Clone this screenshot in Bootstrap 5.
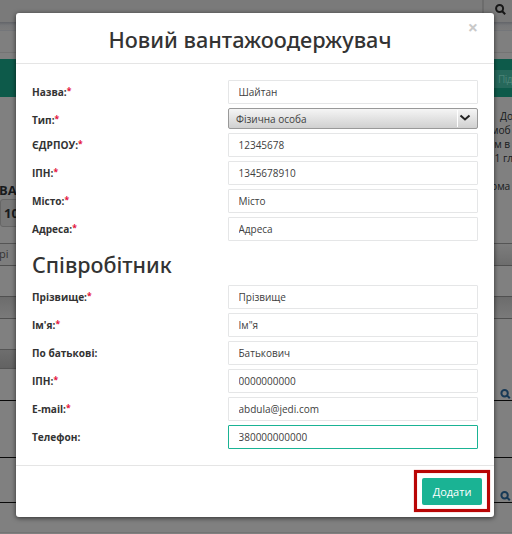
<!DOCTYPE html>
<html lang="uk">
<head>
<meta charset="utf-8">
<meta name="viewport" content="width=device-width, initial-scale=1">
<title>Новий вантажоодержувач</title>
<link href="https://cdn.jsdelivr.net/npm/bootstrap@5.3.0/dist/css/bootstrap.min.css" rel="stylesheet">
<style>
body{width:512px;height:534px;overflow:hidden;background:#808080;font-family:"Open Sans","Noto Sans",sans-serif;font-size:11px;line-height:14px;color:#333}
/* dimmed page */
.page-under{height:534px;color:#171a1c}
.band{display:flex;justify-content:space-between;flex:none;overflow:hidden;white-space:nowrap}
.b-top{height:22px;background:#7a7a7a}
.b-top .search-cell{width:30px;height:13px;border-left:2px solid #6c6c6c;padding:4px 0 0 11px;overflow:visible}
.b-edge{height:8px;background:linear-gradient(#626469,#767779 40%,#7b7b7b)}
.b-crumb{height:23px;background:#7f7f7f;border-top:1px solid #74767a;border-bottom:1px solid #747474}
.b-gap{height:6px}
.b-teal{height:38px;background:#0d5a4a;padding-top:11px}
.b-teal span{width:19px;height:18px;background:#26685b;color:#4b8478;padding:2px 0 0 5px;font-size:10px;letter-spacing:-.5px}
.b-text{height:146px}
.left-note{width:17px;padding-top:86px}
.left-note b{display:block;font-size:13px;line-height:15px;margin-left:-1px}
.qty{width:30px;height:28px;margin-top:1px;border:1px solid #666;border-radius:3px;background:#787878;font-size:13px;font-weight:700;padding:6px 3px}
.right-note{width:24px;padding-top:12px;font-size:10.2px}
.right-note p{margin:0;height:14px}
.right-note .in{padding-left:12px}
.right-note .in1{padding-left:3px}
.right-note .tight{margin-left:-2px}
.b-input{height:22px;border-top:1px solid #555}
.b-input .l{width:16px;background:#7d7d7d;padding-top:3px;color:#333;text-indent:-1px}
.b-input .r{width:19px;background:linear-gradient(#7d7d7d,#6d6d6d)}
.b-plain{height:31px;border-top:1px solid #505050}
.b-grad{height:22px;border-top:1px solid #505050;background:linear-gradient(#6c6c6c,#7a7a7a)}
.b-foot{height:51px;border-top:1px solid #505050;padding-top:30px}
.b-foot .l{width:17px;height:20px;border-top:1px solid #555;border-bottom:1px solid #555;background:linear-gradient(#6e6e6e,#626262)}
.b-row{border-bottom:1px solid #0a0a0a;justify-content:flex-end;align-items:flex-end;padding-right:1px}
.b-r1{height:32px}.b-r2{height:57px}.b-r3{height:45px}
.b-end{height:30px;border-bottom:1px solid #747474}
.lens{display:block;width:11px;height:11px;fill:none;stroke:#173956;stroke-width:2}
.b-top .lens{stroke:#171717}
/* dialog */
.dlg{position:absolute;left:16px;top:13px;width:478px;height:504px;background:#fff;border:0;border-radius:3px;box-shadow:0 1px 5px rgba(0,0,0,.65)}
.dlg .modal-header{height:51px;padding:4px 10px 0 0;border-bottom:1px solid #e5e5e5;position:relative;border-radius:0}
.dlg h4,.dlg h3{font-family:"Noto Sans","Open Sans",sans-serif;font-size:21.7px;line-height:28px;font-weight:500;color:#333}
.shut{position:absolute;right:16px;top:6px;border:0;background:none;padding:0;font-size:18px;line-height:17px;font-weight:700;color:#c9c9c9}
.dlg .modal-body{padding:16px 16px 0}
.frow{display:grid;grid-template-columns:196px 250px;grid-template-rows:24px;margin-bottom:4px}
.frow.short{grid-template-rows:21px}
.frow label{font-size:10.1px;font-weight:700;line-height:24px}
.frow label i{color:#e4133c;font-style:normal;font-weight:700;font-size:8.5px;line-height:0;vertical-align:2px}
.frow .form-control{height:24px;min-height:0;border:1px solid #e5e6e7;border-radius:1px;padding:0 9.5px;font-size:10px;line-height:22px;color:#404040;box-shadow:none}
.frow .form-control.active{border-color:#1ab394}
.pick{height:21px;border:1px solid #999;border-radius:2px;background:linear-gradient(#f5f5f5,#d0d0d0);padding-left:7px;font-size:10px;color:#404040}
.pick .arrow{width:20px;height:17px;border-left:1px solid #fff}
.dlg h3{margin:0;padding:6px 0;height:40px;font-size:21.5px}
.dlg .modal-footer{height:52px;margin-top:auto;border-top:1px solid #e5e5e5;padding:0 4px 1px 0;align-items:center}
.mark-box{width:76px;height:42px;border:3px solid #b90505;box-shadow:0 0 1px #d66,inset 0 0 1px #d66;padding:5px}
.btn-add{width:60px;height:27px;background:#1ab394;color:#fff;border-radius:2px;border:0;padding:1px 0 0;font-size:11px;display:block}
</style>
</head>
<body>
<div class="page-under d-flex flex-column">
<div class="band b-top"><span></span><div class="search-cell"><svg class="lens" viewBox="0 0 11 11"><circle cx="4.6" cy="4.5" r="3.5"/><path d="M7 7l3.2 3.2"/></svg></div></div>
<div class="band b-edge"></div><div class="band b-crumb"></div><div class="band b-gap"></div>
<div class="band b-teal justify-content-end"><span>Під</span></div>
<div class="band b-text"><div class="left-note"><b>ВА</b><div class="qty">10</div></div>
<div class="right-note"><p class="in">До</p><p class="in1">моб</p><p>ом в</p><p class="tight">1.1 гл</p><p></p><p class="in1">ома</p></div></div>
<div class="band b-input"><div class="l">рі</div><div class="r"></div></div>
<div class="band b-plain"></div><div class="band b-grad"></div>
<div class="band b-foot"><div class="l"></div></div>
<div class="band b-row b-r1"><svg class="lens" viewBox="0 0 11 11"><circle cx="4.6" cy="4.2" r="3.2"/><path d="M7 6.4l2.8 2.9"/></svg></div>
<div class="band b-row b-r2"></div>
<div class="band b-row b-r3"><svg class="lens" viewBox="0 0 11 11"><circle cx="4.6" cy="4.2" r="3.2"/><path d="M7 6.4l2.8 2.9"/></svg></div>
<div class="band b-end"></div>
</div>
<div class="modal-content dlg d-flex flex-column">
<div class="modal-header justify-content-center"><h4 class="modal-title">Новий вантажоодержувач</h4><button class="shut" type="button">×</button></div>
<div class="modal-body">
<div class="frow"><label>Назва:<i>*</i></label><input class="form-control" value="Шайтан"></div>
<div class="frow short"><label>Тип:<i>*</i></label><div class="pick d-flex align-items-center justify-content-between"><span>Фізична особа</span><span class="arrow d-flex"><svg width="18" height="17" viewBox="0 0 18 17"><path d="M2.5 5.5l4.5 4 4.5-4" fill="none" stroke="#222" stroke-width="2"/></svg></span></div></div>
<div class="frow"><label>ЄДРПОУ:<i>*</i></label><input class="form-control" value="12345678"></div>
<div class="frow"><label>ІПН:<i>*</i></label><input class="form-control" value="1345678910"></div>
<div class="frow"><label>Місто:<i>*</i></label><input class="form-control" value="Місто"></div>
<div class="frow"><label>Адреса:<i>*</i></label><input class="form-control" value="Адреса"></div>
<h3>Співробітник</h3>
<div class="frow"><label>Прізвище:<i>*</i></label><input class="form-control" value="Прізвище"></div>
<div class="frow"><label>Ім'я:<i>*</i></label><input class="form-control" value="Ім&quot;я"></div>
<div class="frow"><label>По батькові:</label><input class="form-control" value="Батькович"></div>
<div class="frow"><label>ІПН:<i>*</i></label><input class="form-control" value="0000000000"></div>
<div class="frow"><label>E-mail:<i>*</i></label><input class="form-control" value="abdula@jedi.com"></div>
<div class="frow"><label>Телефон:</label><input class="form-control active" value="380000000000"></div>
</div>
<div class="modal-footer"><div class="mark-box m-0"><button class="btn btn-add" type="button">Додати</button></div></div>
</div>
<script src="https://cdn.jsdelivr.net/npm/bootstrap@5.3.0/dist/js/bootstrap.bundle.min.js"></script>
</body>
</html>
